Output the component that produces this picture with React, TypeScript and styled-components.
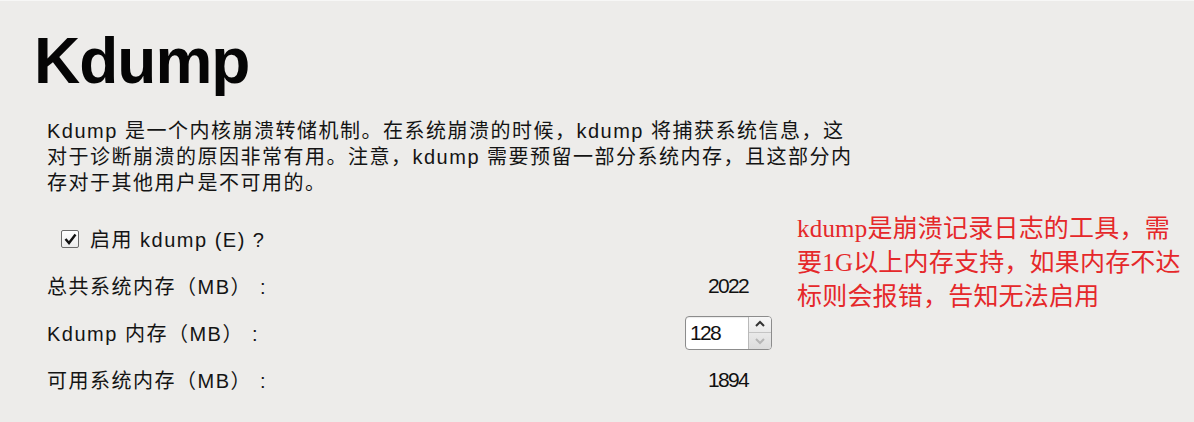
import React from "react";
import styled, { createGlobalStyle } from "styled-components";

const Global = createGlobalStyle`
  html, body { margin: 0; padding: 0; background: #edecea; }
  body { width: 1194px; height: 422px; overflow: hidden; }
`;

const Page = styled.div`
  display: flex;
  align-items: flex-start;
  padding: 28px 0 0 34px;
  height: 394px;
  background: #edecea;
  border-top: 1px solid #f7f7f6;
  box-sizing: border-box;
`;

const Main = styled.div`
  width: 763px;
  flex: none;
  display: flex;
  flex-direction: column;
`;

const Title = styled.h1`
  margin: 0;
  font-family: "Liberation Sans", Arial, sans-serif;
  font-weight: 700;
  font-size: 64px;
  line-height: 64px;
  letter-spacing: -1px;
  color: #050505;
`;

const Body = styled.div`
  padding-left: 13px;
  font-family: "Liberation Sans", "Noto Sans CJK SC", sans-serif;
  font-size: 20px;
  letter-spacing: 1.5px;
  color: #141414;
`;

const Intro = styled.p`
  margin: 25px 0 0;
  line-height: 26px;
  white-space: nowrap;
`;

const Form = styled.div`
  margin-top: 19px;
  display: grid;
  grid-template-columns: 638px 87px;
  grid-auto-rows: 47px;
  align-items: center;
`;

const CheckRow = styled.label`
  grid-column: 1 / -1;
  display: flex;
  align-items: center;
  gap: 11px;
  padding-left: 14px;
`;

const Box = styled.span`
  width: 16px;
  height: 16px;
  border: 1px solid #6a6a6a;
  border-radius: 2px;
  background: linear-gradient(#ffffff, #ececec);
  display: flex;
  align-items: center;
  justify-content: center;
`;

const Label = styled.span`
  white-space: nowrap;
`;

const Colon = styled.span`
  margin-left: 8px;
`;

const Value = styled.span`
  justify-self: end;
  padding-right: 24px;
  font-family: "Liberation Sans", sans-serif;
  font-size: 21px;
  letter-spacing: -1.7px;
  color: #111;
`;

const Spin = styled.div`
  display: flex;
  width: 85px;
  height: 32px;
  border: 1px solid #8c8c8c;
  border-radius: 4px;
  background: #fff;
  overflow: hidden;
  box-shadow: inset 0 1px 1px rgba(0,0,0,0.08);
`;

const SpinInput = styled.span`
  flex: 1;
  display: flex;
  align-items: center;
  padding-left: 4px;
  font-family: "Liberation Sans", sans-serif;
  font-size: 21px;
  letter-spacing: -1.7px;
  color: #111;
`;

const SpinButtons = styled.div`
  width: 22px;
  display: flex;
  flex-direction: column;
  border-left: 1px solid #b9b9b9;
  background: linear-gradient(#f6f6f6, #dcdcdc);
`;

const SpinBtn = styled.span<{ $down?: boolean }>`
  flex: 1;
  display: flex;
  align-items: center;
  justify-content: center;
  border-top: ${(p) => (p.$down ? "1px solid #c4c4c4" : "none")};
`;

const Note = styled.div`
  margin: 183px 0 0 0;
  font-family: "Liberation Serif", "Noto Sans CJK SC", serif;
  font-size: 25px;
  line-height: 34px;
  letter-spacing: 0.2px;
  color: #e5282a;
  white-space: nowrap;
`;

const Arrow = ({ up, color }: { up?: boolean; color: string }) => (
  <svg width="12" height="8" viewBox="0 0 12 8">
    <path
      d={up ? "M2 6 L6 2 L10 6" : "M2 2 L6 6 L10 2"}
      fill="none"
      stroke={color}
      strokeWidth="2"
    />
  </svg>
);

export default function App() {
  return (
    <>
      <Global />
      <Page>
        <Main>
          <Title>Kdump</Title>
          <Body>
            <Intro>
              Kdump 是一个内核崩溃转储机制。在系统崩溃的时候，kdump 将捕获系统信息，这
              <br />
              对于诊断崩溃的原因非常有用。注意，kdump 需要预留一部分系统内存，且这部分内
              <br />
              存对于其他用户是不可用的。
            </Intro>
            <Form>
              <CheckRow>
                <Box>
                  <svg width="13" height="12" viewBox="0 0 13 12">
                    <path d="M1.5 6 L5 10 L11.5 1.5" fill="none" stroke="#111" strokeWidth="2.4" />
                  </svg>
                </Box>
                <Label>启用 kdump (E) ?</Label>
              </CheckRow>
              <Label>
                总共系统内存（MB）<Colon>:</Colon>
              </Label>
              <Value>2022</Value>
              <Label>
                Kdump 内存（MB）<Colon>:</Colon>
              </Label>
              <Spin>
                <SpinInput>128</SpinInput>
                <SpinButtons>
                  <SpinBtn>
                    <Arrow up color="#333" />
                  </SpinBtn>
                  <SpinBtn $down>
                    <Arrow color="#b5b5b5" />
                  </SpinBtn>
                </SpinButtons>
              </Spin>
              <Label>
                可用系统内存（MB）<Colon>:</Colon>
              </Label>
              <Value>1894</Value>
            </Form>
          </Body>
        </Main>
        <Note>
          kdump是崩溃记录日志的工具，需
          <br />
          要1G以上内存支持，如果内存不达
          <br />
          标则会报错，告知无法启用
        </Note>
      </Page>
    </>
  );
}
